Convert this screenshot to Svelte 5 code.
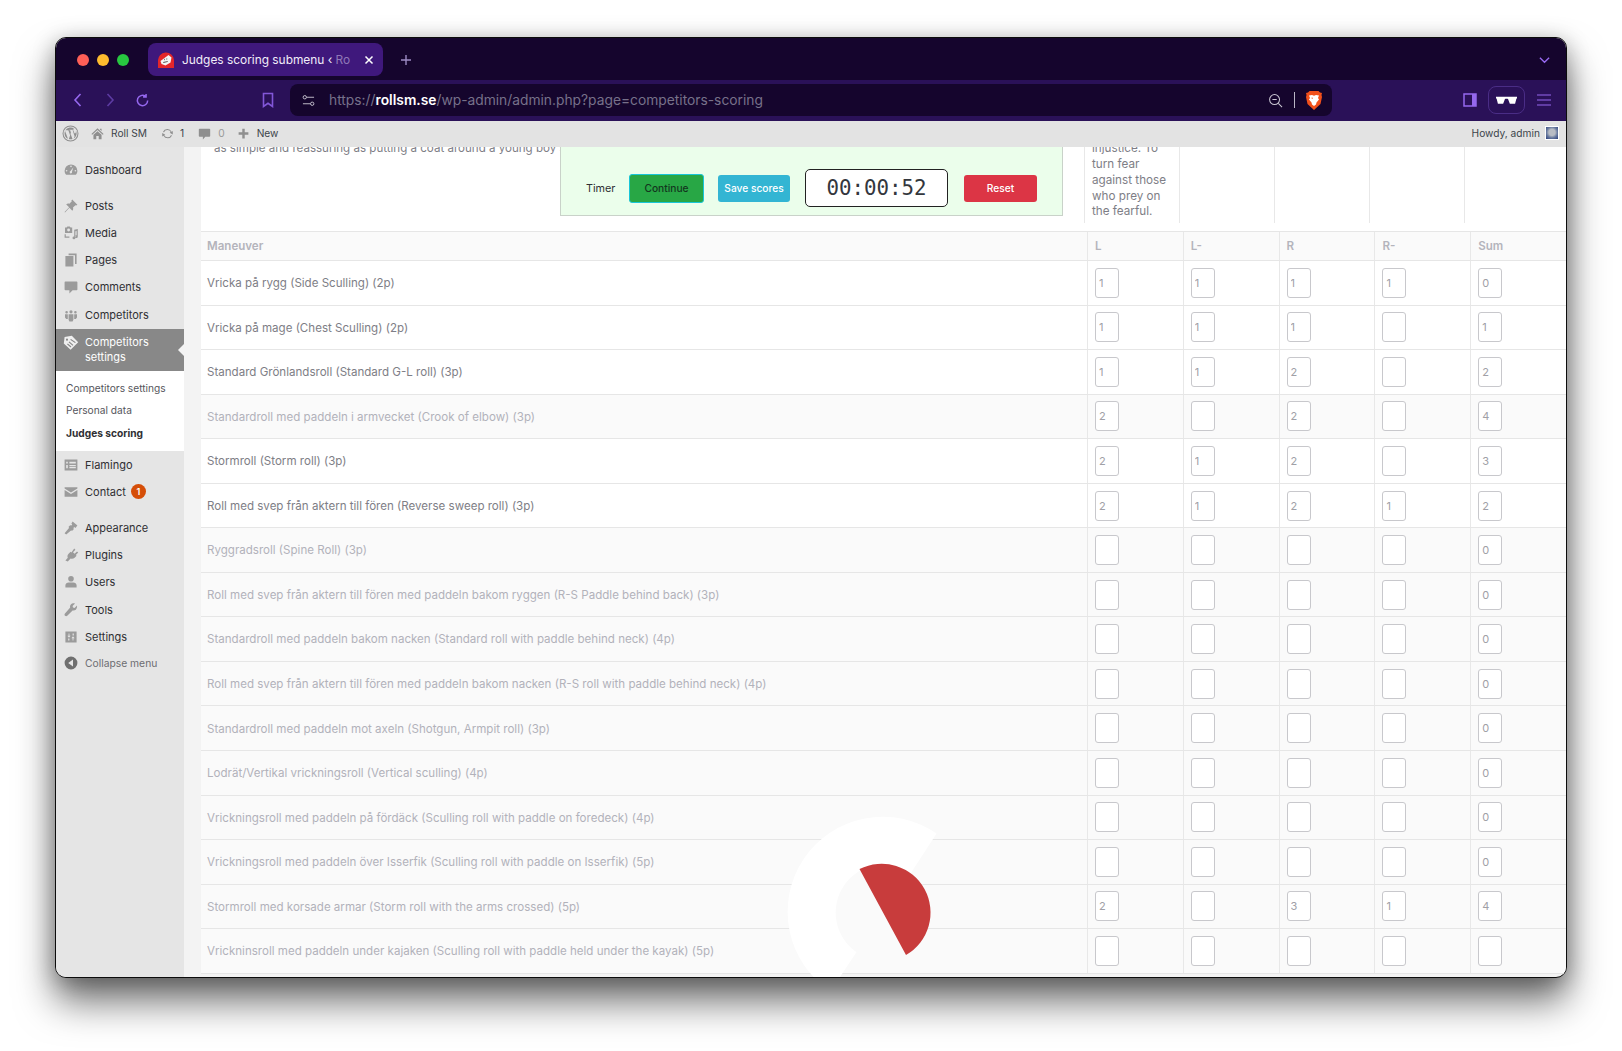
<script>
  const menuTop = [
    { label: 'Dashboard', icon: 'dashboard', gap: 1 },
    { label: 'Posts', icon: 'pin' },
    { label: 'Media', icon: 'media' },
    { label: 'Pages', icon: 'pages' },
    { label: 'Comments', icon: 'comment' },
    { label: 'Competitors', icon: 'group' }
  ]

  const menuBottom = [
    { label: 'Flamingo', icon: 'flamingo' },
    { label: 'Contact', icon: 'mail', badge: '1', gap: 1 },
    { label: 'Appearance', icon: 'brush' },
    { label: 'Plugins', icon: 'plug' },
    { label: 'Users', icon: 'user' },
    { label: 'Tools', icon: 'wrench' },
    { label: 'Settings', icon: 'sliders' }
  ]

  const icons = {
    dashboard: 'M10 3a8 8 0 0 0-8 8c0 2 .7 3.800 2 5h12c1.300-1.200 2-3 2-5a8 8 0 0 0-8-8zM10 4.500a1 1 0 1 1 0 2 1 1 0 0 1 0-2zM4.500 10a1 1 0 1 1 0 2 1 1 0 0 1 0-2zM15.500 10a1 1 0 1 1 0 2 1 1 0 0 1 0-2zM13 6.500l-1.800 5.600a1.500 1.500 0 1 1-1.800-.8z',
    pin: 'M11.500 2l6.500 6.500-1.500 1-1-.5-3 3c.5 1.500.2 3-.8 4l-3.700-3.700L2.500 18l-.5-.5 5.700-5.800L4 8c1-1 2.500-1.300 4-.8l3-3-.5-1z',
    media: 'M2.500 3h2l1-1h3l1 1h2v7h-9zM7 4.500a1.800 1.800 0 1 0 0 3.600 1.800 1.800 0 0 0 0-3.600zM14 6l4.500-1v9.500a1.800 1.800 0 1 1-1.500-1.700V7.500l-1.500.4v8.100a1.800 1.800 0 1 1-1.500-1.700zM2 11.500h1.500v3H8V16H2z',
    pages: 'M7 2h10v13h-2V4H7zM3 5h10v13H3z',
    comment: 'M3 3h14a1 1 0 0 1 1 1v9a1 1 0 0 1-1 1h-5l-4 4v-4H3a1 1 0 0 1-1-1V4a1 1 0 0 1 1-1z',
    group: 'M10 4a2 2 0 1 1 0 4 2 2 0 0 1 0-4zM4.500 5a1.600 1.600 0 1 1 0 3.200 1.600 1.600 0 0 1 0-3.200zM15.500 5a1.600 1.600 0 1 1 0 3.200 1.600 1.600 0 0 1 0-3.200zM7 9h6v7l-1 2H8l-1-2zM2.500 9H6v6H4l-1.500-2zM14 9h3.500v4L16 15h-2z',
    flamingo: 'M2 3h16v14H2zM4 6v2h2V6zM8 6v2h8V6zM4 10v4h2v-4zM8 10v1.500h8V10zM8 12.500V14h8v-1.500z',
    mail: 'M2 4h16v1.500l-8 5-8-5zM2 7.500l8 5 8-5V16H2z',
    brush: 'M12 2l6 5-2.500 3-1.500-1.200-1 1.200 .5 1.500-2 2-1.500-.5L4 18l-2-1.500 5.500-6.500-.5-1.500 2-2 1.500.3 1-1.300-1-1z',
    plug: 'M14 2l1.500 1.500-3 3 2 2 3-3L19 7l-3 3 1 1-2.500 2.500c-1.500 1.500-3.500 1.500-5 1L6 18l-3-1 3-3.500c-.8-1.500-.5-3.500 1-5L9.500 6l1 1z',
    user: 'M10 2.500a3.500 3.500 0 1 1 0 7 3.500 3.500 0 0 1 0-7zM3 17v-3c0-2 2-3.500 4-3.500h6c2 0 4 1.500 4 3.500v3z',
    wrench: 'M17.500 4.500l-3 3-2-.5-.5-2 3-3c-2-.8-4-.3-5.200 1-1 1.200-1.300 2.700-.8 4L2.500 14.500c-.8.8-.8 2 0 2.800s2 .8 2.800 0L12 10.500c1.300.5 2.800.2 4-.8 1.300-1.200 1.800-3.300 1.500-5.200z',
    sliders: 'M3 3h14v14H3zM7 5.500v3H5.500L7.500 11l2-2.500H8v-3zM12 14.500v-3h-1.500l2-2.500 2 2.500H13v3zM6.500 12v2.500H8V12zM12 5.500V8h1.500V5.500z',
    back: 'M10 2a8 8 0 1 1 0 16 8 8 0 0 1 0-16zM12.500 5.500L6.500 10l6 4.500z'
  }

  // L, L-, R, R-, Sum
  const rows = [
    ['Vricka på rygg (Side Sculling) (2p)', '1', '1', '1', '1', '0'],
    ['Vricka på mage (Chest Sculling) (2p)', '1', '1', '1', '', '1'],
    ['Standard Grönlandsroll (Standard G-L roll) (3p)', '1', '1', '2', '', '2'],
    ['Standardroll med paddeln i armvecket (Crook of elbow) (3p)', '2', '', '2', '', '4', 1],
    ['Stormroll (Storm roll) (3p)', '2', '1', '2', '', '3'],
    ['Roll med svep från aktern till fören (Reverse sweep roll) (3p)', '2', '1', '2', '1', '2'],
    ['Ryggradsroll (Spine Roll) (3p)', '', '', '', '', '0', 1],
    ['Roll med svep från aktern till fören med paddeln bakom ryggen (R-S Paddle behind back) (3p)', '', '', '', '', '0', 1],
    ['Standardroll med paddeln bakom nacken (Standard roll with paddle behind neck) (4p)', '', '', '', '', '0', 1],
    ['Roll med svep från aktern till fören med paddeln bakom nacken (R-S roll with paddle behind neck) (4p)', '', '', '', '', '0', 1],
    ['Standardroll med paddeln mot axeln (Shotgun, Armpit roll) (3p)', '', '', '', '', '0', 1],
    ['Lodrät/Vertikal vrickningsroll (Vertical sculling) (4p)', '', '', '', '', '0', 1],
    ['Vrickningsroll med paddeln på fördäck (Sculling roll with paddle on foredeck) (4p)', '', '', '', '', '0', 1],
    ['Vrickningsroll med paddeln över Isserfik (Sculling roll with paddle on Isserfik) (5p)', '', '', '', '', '0', 1],
    ['Stormroll med korsade armar (Storm roll with the arms crossed) (5p)', '2', '', '3', '1', '4', 1],
    ['Vrickninsroll med paddeln under kajaken (Sculling roll with paddle held under the kayak) (5p)', '', '', '', '', '', 1]
  ]
</script>

{#snippet menuItem(item)}
  <a class="item" class:gap={item.gap} href="#top">
    <svg class="mi" viewBox="0 0 20 20"><path fill-rule="evenodd" d={icons[item.icon]} /></svg>
    <span>{item.label}</span>
    {#if item.badge}<b class="badge">{item.badge}</b>{/if}
  </a>
{/snippet}

<div class="page">
  <div class="window">
    <div class="tabstrip">
      <div class="lights"><i class="red"></i><i class="yellow"></i><i class="green"></i></div>
      <div class="tab">
        <svg class="favicon" viewBox="0 0 16 16">
          <path fill="#e3262a" d="M0 9a8 8 0 0 1 16-1v8H0z" />
          <path fill="#f4f4f4" d="M2.500 9l8-6 3 2.500-1 5-5 3-4-1.500z" />
          <path fill="#555" d="M6 6.500l1 1-1 1zM8.500 6l1 1-1 1zM5 10l5-1-.5 1-4 1z" />
        </svg>
        <span class="title">Judges scoring submenu ‹ <em>Ro</em></span>
        <svg class="close" viewBox="0 0 10 10"><path d="M1.500 1.500l7 7M8.500 1.500l-7 7" /></svg>
      </div>
      <svg class="plus" viewBox="0 0 12 12"><path d="M6 1v10M1 6h10" /></svg>
      <svg class="more" viewBox="0 0 12 8"><path d="M1 1.500l5 5 5-5" /></svg>
    </div>

    <div class="toolbar">
      <svg class="nav first" viewBox="0 0 12 16"><path d="M8.500 2L3 8l5.500 6" /></svg>
      <svg class="nav dim" viewBox="0 0 12 16"><path d="M3.500 2L9 8l-5.500 6" /></svg>
      <svg class="nav reload" viewBox="0 0 16 16"><path d="M13.500 8A5.500 5.500 0 1 1 11 3.400M11.800 1v3.200H8.600" /></svg>
      <svg class="nav mark" viewBox="0 0 14 16"><path d="M2.500 1.500h9v13L7 11.300l-4.500 3.200z" /></svg>
      <div class="address">
        <svg class="tune" viewBox="0 0 14 14"><path d="M5 3.500h8M1 10.500h8" /><circle cx="3" cy="3.500" r="1.800" /><circle cx="11" cy="10.500" r="1.800" /></svg>
        <span class="url">https://<b>rollsm.se</b>/wp-admin/admin.php?page=competitors-scoring</span>
        <svg class="zoomout" viewBox="0 0 16 16"><circle cx="7" cy="7" r="5.300" /><path d="M4.700 7h4.600M11 11l4 4" /></svg>
        <i class="sep"></i>
        <svg class="brave" viewBox="0 0 16 19">
          <path fill="#f1501b" d="M3.500 0h9L14 1.500l2 .5-.5 2 .5 2-1.500 7L8 19l-6.500-6L0 6l.5-2L0 2l2-.5z" />
          <path fill="#fff" d="M3 4.500l3-.5 2 .8 2-.8 3 .5-1 2.500 1 1.500-2.500 3-.5 2L8 15l-2-1.500-.5-2L3 8.500l1-1.500zM5 7l2 1-.5-1.500zm6 0L9 8l.5-1.500z" />
        </svg>
      </div>
      <svg class="panel" viewBox="0 0 14 14"><path fill="none" stroke="#9568ee" stroke-width="1.500" d="M1 1h12v12H1z" /><path fill="#9568ee" d="M9 1h4v12H9z" /></svg>
      <div class="shades">
        <svg viewBox="0 0 22 9"><path fill="#fff" d="M0 .5h22v2h-.6l-1.400 5.500h-5.500L12.600 3c-1-.5-2.200-.5-3.200 0L7.500 8H2L.6 2.500H0z" /></svg>
      </div>
      <svg class="burger" viewBox="0 0 14 12"><path d="M0 1h14M0 6h14M0 11h14" /></svg>
    </div>

    <div class="adminbar">
      <svg class="wp" viewBox="0 0 20 20"><circle cx="10" cy="10" r="8.800" fill="none" stroke="#8f8f8f" stroke-width="1.200" /><path fill="#8f8f8f" d="M3 10c0 2.800 1.600 5.200 4 6.300L3.600 7.200C3.200 8.100 3 9 3 10zm11.500-.4c0-.9-.3-1.500-.6-2-.4-.6-.7-1.100-.7-1.700 0-.7.5-1.300 1.200-1.300A7 7 0 0 0 4 6.200h1.700l1.800.1L9.500 12l1-3-.8-2.700-.8-.1c-.4 0-.4-.6 0-.6l2.200.1 2.200-.1c.4 0 .4.600 0 .6l-.8.1 2.400 7.200.7-2.200c.5-.9.9-1.200.9-1.700zM10.100 10.700l-2 5.800a7 7 0 0 0 4.300-.1zM16.300 6.600c.1.300.1.500.1.800 0 .7-.1 1.500-.5 2.500l-2.100 6A7 7 0 0 0 16.300 6.600z" /></svg>
      <svg class="bar-i home" viewBox="0 0 16 16"><path d="M8 1.500l7.500 7-1 1L8 3.700 1.500 9.500l-1-1zM11 2h2v3l-2-1.800zM3 9.500l5-4.400 5 4.400V15H9.500v-4h-3v4H3z" /></svg>
      <span class="site">Roll SM</span>
      <svg class="bar-i upd" viewBox="0 0 16 16"><path d="M8 2.500a5.500 5.500 0 0 1 5 3.200l1.500-.9v4.400L10.700 7l1.300-.7A4.500 4.500 0 0 0 3.800 6.500L2.300 6A6 6 0 0 1 8 2.500zM1.500 7.300l3.800 2.200-1.300.7a4.500 4.500 0 0 0 8.200-.2l1.500.5A6 6 0 0 1 3 10.700l-1.500.9z" /></svg>
      <span class="num">1</span>
      <svg class="bar-i cmt" viewBox="0 0 16 16"><path d="M2 2h12a1 1 0 0 1 1 1v8a1 1 0 0 1-1 1H9l-3 3.500V12H2a1 1 0 0 1-1-1V3a1 1 0 0 1 1-1z" /></svg>
      <span class="num zero">0</span>
      <svg class="bar-i add" viewBox="0 0 16 16"><path d="M6.500 2h3v4.500H14v3H9.500V14h-3V9.500H2v-3h4.500z" /></svg>
      <span class="site">New</span>
      <span class="howdy">Howdy, admin</span>
      <i class="avatar"></i>
    </div>

    <div class="body">
      <nav class="sidebar">
        {#each menuTop as item}
          {@render menuItem(item)}
        {/each}
        <div class="current">
          <svg class="mi" viewBox="0 0 20 20"><path fill="#efefef" fill-rule="evenodd" d="M11 1l8 8-9.500 9.500L1 10.500 2 2.500zM5 4.500a1.300 1.300 0 1 0 0 2.600 1.300 1.300 0 0 0 0-2.600zM10 5l-1 1 6 4 1-1zM8 8l-1 1 5 4.500 1-1zM6 10.500l-1 1 4.500 4 1-1z" /></svg>
          <span>Competitors settings</span>
        </div>
        <div class="submenu">
          <a href="#top">Competitors settings</a>
          <a href="#top">Personal data</a>
          <a href="#top" class="on">Judges scoring</a>
        </div>
        {#each menuBottom as item}
          {@render menuItem(item)}
        {/each}
        <a class="item collapse" href="#top">
          <svg class="mi" viewBox="0 0 20 20"><path fill-rule="evenodd" d={icons.back} /></svg>
          <span>Collapse menu</span>
        </a>
      </nav>

      <main class="content">
        <div class="top-row">
          <div class="lead">
            <p class="quote">as simple and reassuring as putting a coat around a young boy shoulders</p>
            <div class="timer">
              <span class="timer-label">Timer</span>
              <button class="btn continue">Continue</button>
              <button class="btn save">Save scores</button>
              <div class="clock">00:00:52</div>
              <button class="btn reset">Reset</button>
            </div>
          </div>
          <div class="cell note">injustice. To turn fear against those who prey on the fearful.</div>
          <div class="cell"></div>
          <div class="cell"></div>
          <div class="cell"></div>
          <div class="cell"></div>
        </div>

        <div class="row head">
          <div class="name">Maneuver</div>
          <div>L</div>
          <div>L-</div>
          <div>R</div>
          <div>R-</div>
          <div>Sum</div>
        </div>
        {#each rows as r}
          <div class="row" class:muted={r[6]}>
            <div class="name">{r[0]}</div>
            {#each r.slice(1, 6) as v}
              <div><input type="text" value={v} /></div>
            {/each}
          </div>
        {/each}

        <!-- loading spinner lying over the table -->
        <svg class="spinner" viewBox="0 0 200 200">
          <circle cx="100" cy="100" r="48" fill="#fafafa" />
          <path fill="#fff" d="M153.600 21.600A95 95 0 1 0 47.500 179.200L73.500 140.200A48 48 0 1 1 127.900 61z" />
          <path fill="#c83c3c" d="M76.500 57A48.900 48.900 0 0 1 123 143z" />
        </svg>
      </main>
    </div>
  </div>
</div>

<style>
  :global(body) {
    background: #fff;
    font-family: Inter, "Noto Sans", sans-serif;
  }

  .page {
    height: 1051px;
    box-sizing: border-box;
    padding: 37px 55px 73px 55px;
    overflow: hidden;
  }

  .window {
    height: 939px;
    border: 1px solid #0c0c0c;
    border-radius: 11px;
    overflow: hidden;
    display: flex;
    flex-direction: column;
    box-shadow: 0 24px 38px rgba(0, 0, 0, 0.55), 0 4px 22px rgba(0, 0, 0, 0.28);
    background: #f3f3f3;
  }

  /* browser chrome */
  .tabstrip {
    height: 42px;
    flex: none;
    background: #15052d;
    display: flex;
    align-items: center;
    padding-top: 1px;
    box-sizing: border-box;
  }

  .lights {
    display: flex;
    gap: 8px;
    margin-left: 21px;
  }

  .lights i {
    width: 12px;
    height: 12px;
    border-radius: 50%;
  }

  .red { background: #fe5f57; }
  .yellow { background: #febc2e; }
  .green { background: #28c840; }

  .tab {
    width: 235px;
    height: 33px;
    margin-left: 19px;
    background: #3f187c;
    border-radius: 8px;
    display: flex;
    align-items: center;
    box-sizing: border-box;
    padding: 0 9px 0 10px;
  }

  .favicon {
    width: 16px;
    height: 16px;
    flex: none;
  }

  .title {
    flex: 1;
    margin-left: 8px;
    font-size: 11.900px;
    color: #f1edf9;
    white-space: nowrap;
    overflow: hidden;
  }

  .title em {
    font-style: normal;
    color: #8f78b8;
  }

  .close {
    width: 10px;
    height: 10px;
    flex: none;
    margin-left: 6px;
    fill: none;
    stroke: #fff;
    stroke-width: 1.500;
  }

  .plus {
    width: 12px;
    height: 12px;
    margin-left: 17px;
    fill: none;
    stroke: #9d8bc4;
    stroke-width: 1.400;
  }

  .more {
    width: 11px;
    height: 8px;
    margin-left: auto;
    margin-right: 16px;
    fill: none;
    stroke: #9568ee;
    stroke-width: 1.500;
  }

  .toolbar {
    height: 41px;
    flex: none;
    background: #2a1158;
    display: flex;
    align-items: center;
    padding-bottom: 1px;
    box-sizing: border-box;
  }

  .nav {
    width: 12px;
    height: 16px;
    flex: none;
    fill: none;
    stroke: #9568ee;
    stroke-width: 1.600;
    margin-left: 20px;
  }

  .nav.first { margin-left: 16px; }
  .nav.dim { stroke: #5d3ba3; }
  .nav.reload { width: 15px; height: 15px; margin-left: 19px; }
  .nav.mark { width: 14px; height: 16px; margin-left: 111px; stroke: #8257d8; }

  .address {
    width: 1042px;
    height: 32px;
    margin-left: 15px;
    background: #15052d;
    border-radius: 8px;
    display: flex;
    align-items: center;
    flex: none;
  }

  .tune {
    width: 13px;
    height: 13px;
    margin-left: 12px;
    fill: none;
    stroke: #c9c6d2;
    stroke-width: 1;
  }

  .url {
    margin-left: 14px;
    font-size: 13.800px;
    color: #77718a;
    white-space: nowrap;
  }

  .url b {
    font-weight: 600;
    color: #fff;
  }

  .zoomout {
    width: 15px;
    height: 15px;
    margin-left: auto;
    fill: none;
    stroke: #c9c6d2;
    stroke-width: 1.100;
  }

  .sep {
    width: 1px;
    height: 16px;
    margin: 0 11px;
    background: #b9b5c6;
  }

  .brave {
    width: 16px;
    height: 19px;
    margin-right: 10px;
  }

  .panel {
    width: 14px;
    height: 14px;
    margin-left: 131px;
    flex: none;
  }

  .shades {
    width: 37px;
    height: 28px;
    margin-left: 11px;
    box-sizing: border-box;
    border: 1px solid #4a2d86;
    border-radius: 8px;
    display: flex;
    align-items: center;
    justify-content: center;
    flex: none;
  }

  .shades svg {
    width: 21px;
    height: 9px;
  }

  .burger {
    width: 14px;
    height: 12px;
    margin-left: 12px;
    fill: none;
    stroke: #9568ee;
    stroke-width: 1.200;
    flex: none;
  }

  /* wp admin bar */
  .adminbar {
    height: 26px;
    flex: none;
    background: #e3e3e3;
    display: flex;
    align-items: center;
    box-sizing: border-box;
    padding-bottom: 2px;
    font-size: 10.200px;
    color: #3c434a;
    position: relative;
    z-index: 2;
  }

  .wp {
    width: 17px;
    height: 17px;
    margin-left: 6px;
    flex: none;
  }

  .bar-i {
    width: 13px;
    height: 13px;
    fill: #8f8f8f;
    flex: none;
  }

  .home { margin-left: 12px; }
  .upd { margin-left: 14px; }
  .cmt { margin-left: 14px; }
  .add { margin-left: 12px; }
  .site { margin-left: 7px; }
  .num { margin-left: 6px; }
  .zero { color: #9a9a9a; margin-left: 7px; }

  .howdy {
    margin-left: auto;
  }

  .avatar {
    width: 12px;
    height: 12px;
    margin: 0 7px 0 5px;
    border: 1px solid #fff;
    background: radial-gradient(circle at 50% 45%, #b8bcc4 0 35%, #6a7ba0 60%, #2b3f7c 100%);
  }

  .body {
    flex: 1;
    min-height: 0;
    display: flex;
  }

  /* sidebar */
  .sidebar {
    width: 128px;
    flex: none;
    background: #e5e5e5;
    padding-top: 9px;
    font-size: 11px;
    color: #2f2f33;
  }

  .item {
    display: flex;
    align-items: center;
    height: 27.200px;
    padding-left: 7px;
    color: inherit;
    text-decoration: none;
    box-sizing: border-box;
    flex: none;
  }

  .item.gap {
    margin-bottom: 9px;
  }

  .mi {
    width: 16px;
    height: 16px;
    fill: #9b9b9b;
    flex: none;
    margin-right: 6px;
  }

  .badge {
    width: 15px;
    height: 15px;
    margin-left: 5px;
    border-radius: 50%;
    background: #d54e08;
    color: #fff;
    font-size: 9px;
    font-weight: 600;
    display: flex;
    align-items: center;
    justify-content: center;
  }

  .current {
    height: 42px;
    margin-top: 1px;
    background: #888;
    color: #fff;
    display: flex;
    align-items: flex-start;
    padding: 6px 30px 0 7px;
    box-sizing: border-box;
    line-height: 15px;
    position: relative;
  }

  .current::after {
    content: '';
    position: absolute;
    right: 0;
    top: 15px;
    border: 6px solid transparent;
    border-right-color: #f3f3f3;
  }

  .submenu {
    background: #fff;
    height: 80px;
    box-sizing: border-box;
    padding: 5.500px 0 0 10px;
    display: flex;
    flex-direction: column;
    font-size: 10.200px;
    color: #55555c;
  }

  .submenu a {
    height: 22.500px;
    line-height: 22.500px;
    color: inherit;
    text-decoration: none;
  }

  .submenu .on {
    font-weight: 700;
    color: #2f2f33;
  }

  .collapse {
    color: #6d6d72;
    font-size: 10.300px;
    height: 25px;
  }

  .collapse .mi {
    fill: #6f6f6f;
  }

  /* content */
  .content {
    flex: 1;
    min-width: 0;
    padding-left: 17px;
    overflow: hidden;
    position: relative;
    font-size: 11.570px;
    color: #7e7e86;
  }

  .top-row {
    height: 84px;
    display: grid;
    grid-template-columns: 1fr repeat(5, 95px);
    background: #fff;
    padding-right: 7px;
    box-sizing: border-box;
    border-bottom: 8px solid #fff;
  }

  .lead {
    display: flex;
    padding-left: 13px;
    min-width: 0;
  }

  .quote {
    margin: -6px 0 0;
    width: 346px;
    flex: none;
    line-height: 15px;
    white-space: nowrap;
    overflow: hidden;
  }

  .timer {
    width: 503px;
    height: 69px;
    flex: none;
    box-sizing: border-box;
    background: #ebfeeb;
    border: 1px solid #c9d2c9;
    border-top: 0;
    display: flex;
    align-items: center;
    padding: 14px 0 0 25px;
    color: #2f2f33;
    font-size: 10.800px;
  }

  .timer-label {
    width: 43px;
    flex: none;
  }

  .btn {
    height: 27px;
    border: 0;
    border-radius: 3px;
    font: 500 10.200px Inter, "Noto Sans", sans-serif;
    color: #fff;
    flex: none;
    padding: 0;
  }

  .continue {
    width: 75px;
    height: 29px;
    background: #28a745;
    border: 1px solid #19c6d8;
    color: #13361e;
    box-sizing: border-box;
  }

  .save {
    width: 72px;
    margin-left: 14px;
    background: #33b5d3;
  }

  .clock {
    width: 143px;
    height: 38px;
    margin-left: 15px;
    flex: none;
    box-sizing: border-box;
    border: 1px solid #222;
    border-radius: 5px;
    background: #fff;
    display: flex;
    align-items: center;
    justify-content: center;
    font: 20.800px "DejaVu Sans Mono", "Liberation Mono", monospace;
    color: #33373d;
  }

  .reset {
    width: 73px;
    margin-left: 16px;
    background: #dc3545;
  }

  .cell {
    border-left: 1px solid #e8e8e8;
  }

  .note {
    margin-top: -5.600px;
    padding: 0 6px 0 7px;
    line-height: 15.700px;
    font-size: 11.700px;
  }

  .row {
    height: 44.560px;
    box-sizing: border-box;
    display: grid;
    grid-template-columns: 1fr repeat(5, 95.800px);
    background: #fff;
    border-bottom: 1px solid #e6e6e6;
  }

  .row > div {
    display: flex;
    align-items: center;
    border-left: 1px solid #e8e8e8;
    padding-left: 7px;
  }

  .row > .name {
    border-left: 0;
    padding: 0.600px 0 0 6px;
  }

  .row.muted {
    background: #fafafa;
    color: #b2b2ba;
  }

  .row.head {
    height: 30px;
    background: #fafafa;
    border-top: 1px solid #e6e6e6;
    color: #b4b4bc;
    font-weight: 600;
  }

  input {
    width: 24px;
    height: 30px;
    box-sizing: border-box;
    border: 1px solid #c8c8cc;
    border-radius: 3px;
    background: #fff;
    padding: 0 0 0 3px;
    font: 11px Inter, "Noto Sans", sans-serif;
    color: #a0a0a6;
  }

  .spinner {
    position: absolute;
    left: 599px;
    top: 665px;
    width: 200px;
    height: 200px;
  }
</style>
